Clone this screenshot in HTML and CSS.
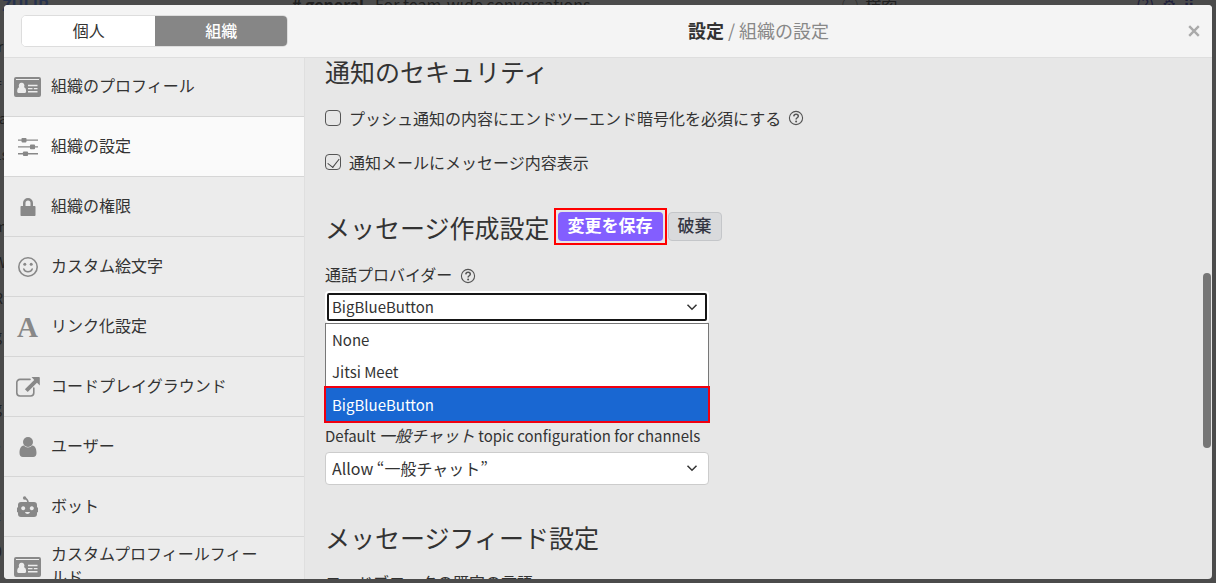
FILE: index.html
```html
<!DOCTYPE html>
<html lang="ja">
<head>
<meta charset="utf-8">
<title>組織の設定</title>
<link rel="stylesheet" href="styles.css">
</head>
<body>
<svg class="sprite" aria-hidden="true">
  <symbol id="card" viewBox="0 0 27 20"><path fill-rule="evenodd" d="M2 0h23a2 2 0 0 1 2 2v16a2 2 0 0 1-2 2H2a2 2 0 0 1-2-2V2a2 2 0 0 1 2-2zM2 2v1h23V2zM7.600 5.800a2.600 2.900 0 0 0-2.400 4.500C3.700 10.800 3.200 12.500 3.200 14.500c0 .8.500 1.400 1.200 1.400h6.500c.7 0 1.200-.6 1.200-1.400 0-2-.5-3.700-2.100-4.200A2.600 2.900 0 0 0 7.600 5.800zM14 7.800v1.400h9.500V7.800zM14 10.900v1.400h4.500v-1.400zM19.800 10.900v1.400h3.700v-1.400zM14 14v1.400h9.500V14z"/></symbol>
  <symbol id="sliders" viewBox="0 0 20 20"><path d="M0 2.400h20v1.400H0zM0 9.200h20v1.400H0zM0 16h20v1.400H0z"/><rect x="3.500" y="1" width="5" height="4.400" rx=".8"/><rect x="12" y="7.600" width="5" height="4.600" rx=".8"/><rect x="5" y="14.400" width="5" height="4.600" rx=".8"/></symbol>
  <symbol id="lock" viewBox="0 0 20 20"><path fill-rule="evenodd" d="M3.500 9H5V6a5 5 0 0 1 10 0v3h1.500c.6 0 1 .4 1 1v8c0 .6-.4 1-1 1h-13c-.6 0-1-.4-1-1v-8c0-.6.4-1 1-1zm4 0h5V6a2.500 2.500 0 0 0-5 0z"/></symbol>
  <symbol id="smile" viewBox="0 0 20 20"><circle cx="10" cy="10" r="9.200" fill="none" stroke="currentColor" stroke-width="1.600"/><circle cx="6.800" cy="7.200" r="1.500"/><circle cx="13.200" cy="7.200" r="1.500"/><path d="M5.800 12c1.300 3.600 7.100 3.600 8.400 0" fill="none" stroke="currentColor" stroke-width="1.600" stroke-linecap="round"/></symbol>
  <symbol id="external" viewBox="0 0 24 20"><path d="M14 2.400H4A3.200 3.200 0 0 0 .8 5.600v10.200A3.200 3.200 0 0 0 4 19h10.600a3.200 3.200 0 0 0 3.200-3.200V11" fill="none" stroke="currentColor" stroke-width="1.600" stroke-linecap="round"/><path d="M15.500 0H23c.5 0 .8.300.8.800V8.500L21 5.800l-9.300 9.300-2.800-2.800L18.200 3z"/></symbol>
  <symbol id="user" viewBox="0 0 20 20"><circle cx="10" cy="5" r="5"/><path d="M5.800 8.600a5.700 5.700 0 0 0 8.400 0c3.200.4 4.300 3.600 4.300 7.400 0 2.400-1.300 4-3.400 4H4.900c-2.100 0-3.400-1.600-3.400-4 0-3.800 1.100-7 4.300-7.400z"/></symbol>
  <symbol id="bot" viewBox="0 0 21 21"><path d="M8 2.200c1.800.6 3 2 3.200 4.800" fill="none" stroke="currentColor" stroke-width="1.500"/><circle cx="7.600" cy="2" r="1.700"/><path fill-rule="evenodd" d="M4 6h13a3 3 0 0 1 3 3v2l1 1v4l-1 .5V18a3 3 0 0 1-3 3H4a3 3 0 0 1-3-3v-1.500L0 16v-4l1-1V9a3 3 0 0 1 3-3zM6.200 10.200a2 2 0 1 0 .01 0zM14.800 10.200a2 2 0 1 0 .01 0zM8 16c.6 2.500 4.400 2.500 5 0z"/></symbol>
  <symbol id="help" viewBox="0 0 16 16"><circle cx="8" cy="8" r="6.600" fill="none" stroke="currentColor" stroke-width="1.100"/><path d="M5.800 6.300c.3-2.900 4.500-2.600 4.500-.1 0 1.600-2.200 1.500-2.200 3.300" fill="none" stroke="currentColor" stroke-width="1.500"/><circle cx="8.100" cy="11.500" r="1"/></symbol>
  <symbol id="chevron" viewBox="0 0 12 12"><path d="M1.500 3.800 6 8.200l4.500-4.400" fill="none" stroke="currentColor" stroke-width="1.500"/></symbol>
</svg>

<div class="backdrop" aria-hidden="true">
  <div class="app-bar">
    <span class="brand">ZULIP</span>
    <span class="channel"><b># general</b> &nbsp; For team-wide conversations</span>
    <span class="search">◯ &nbsp;検索</span>
    <span class="tools">(?) &nbsp;⚙ &nbsp;⠿</span>
  </div>
  <div class="app-side"><span>ir</span><span>=</span><span>ra</span><span>1s</span><span>-</span><span>m</span><span>W</span><span>R</span><span>g</span><span>f</span><span>g</span><span>s</span><span>t</span><span>z</span><span>0</span></div>
</div>

<div class="modal" role="dialog" aria-labelledby="title">
  <header class="modal-head">
    <div class="tabs-area">
      <div class="tabs">
        <button class="tab" type="button">個人</button>
        <button class="tab tab-active" type="button">組織</button>
      </div>
    </div>
    <h1 class="title" id="title"><b>設定</b> / 組織の設定</h1>
    <button class="close" type="button" aria-label="閉じる"><svg viewBox="0 0 10 10"><path d="M1 1l8 8M9 1L1 9" stroke="currentColor" stroke-width="2"/></svg></button>
  </header>

  <div class="modal-body">
    <nav class="sidebar">
      <a class="item" href="#profile"><span class="icon"><svg class="i-card"><use href="#card"/></svg></span><span class="name">組織のプロフィール</span></a>
      <a class="item item-active" href="#settings"><span class="icon"><svg class="i-base"><use href="#sliders"/></svg></span><span class="name">組織の設定</span></a>
      <a class="item" href="#permissions"><span class="icon"><svg class="i-base"><use href="#lock"/></svg></span><span class="name">組織の権限</span></a>
      <a class="item" href="#emoji"><span class="icon"><svg class="i-base"><use href="#smile"/></svg></span><span class="name">カスタム絵文字</span></a>
      <a class="item" href="#linkifiers"><span class="icon letter" aria-hidden="true">A</span><span class="name">リンク化設定</span></a>
      <a class="item" href="#playgrounds"><span class="icon"><svg class="i-wide"><use href="#external"/></svg></span><span class="name">コードプレイグラウンド</span></a>
      <a class="item" href="#users"><span class="icon"><svg class="i-base"><use href="#user"/></svg></span><span class="name">ユーザー</span></a>
      <a class="item" href="#bots"><span class="icon"><svg class="i-bot"><use href="#bot"/></svg></span><span class="name">ボット</span></a>
      <a class="item" href="#fields"><span class="icon"><svg class="i-card"><use href="#card"/></svg></span><span class="name">カスタムプロフィールフィールド</span></a>
    </nav>

    <main class="content">
      <section class="security">
        <h2 class="heading">通知のセキュリティ</h2>
        <label class="check"><input class="box" type="checkbox"><span>プッシュ通知の内容にエンドツーエンド暗号化を必須にする</span><svg class="help"><use href="#help"/></svg></label>
        <label class="check"><input class="box" type="checkbox" checked><span>通知メールにメッセージ内容表示</span></label>
      </section>

      <section class="compose">
        <div class="section-head">
          <h2 class="heading">メッセージ作成設定</h2>
          <div class="marked"><button class="btn save" type="button">変更を保存</button></div>
          <button class="btn discard" type="button">破棄</button>
        </div>
        <div class="field field-open">
          <label class="label" for="provider">通話プロバイダー <svg class="help"><use href="#help"/></svg></label>
          <div class="select-wrap">
            <select class="select select-focus" id="provider"><option>None</option><option>Jitsi Meet</option><option selected>BigBlueButton</option></select>
            <svg class="chevron"><use href="#chevron"/></svg>
            <ul class="menu" role="listbox" aria-label="通話プロバイダー">
              <li class="option" role="option">None</li>
              <li class="option" role="option">Jitsi Meet</li>
              <li class="option option-active" role="option" aria-selected="true">BigBlueButton</li>
            </ul>
          </div>
        </div>
        <div class="field">
          <label class="label label-latin" for="topic">Default <em>一般チャット</em> topic configuration for channels</label>
          <div class="select-wrap">
            <select class="select" id="topic"><option>Allow “一般チャット”</option></select>
            <svg class="chevron"><use href="#chevron"/></svg>
          </div>
        </div>
      </section>

      <section class="feed">
        <div class="section-head"><h2 class="heading">メッセージフィード設定</h2></div>
        <p class="label">コードブロックの既定の言語</p>
      </section>
    </main>
  </div>
  <div class="scroll-thumb"></div>
</div>
</body>
</html>
```

FILE: styles.css
```css
* { box-sizing: border-box; }

body {
  margin: 0;
  height: 100vh;
  padding: 5px 4px 4px;
  overflow: hidden;
  background: #4b4b4b;
  color: #333;
  font: 16px/24px "Noto Sans CJK JP", sans-serif;
}

button, select, input { font: inherit; color: inherit; margin: 0; }
h1, h2, p, ul { margin: 0; padding: 0; font-weight: 400; }
.sprite { position: absolute; width: 0; height: 0; }
svg { fill: currentColor; display: block; }

/* Dimmed app behind the dialog */
.backdrop { position: absolute; inset: 0; overflow: hidden; color: #202020; }
.app-bar { position: absolute; top: -6px; left: 0; right: 0; height: 20px; line-height: 20px; font-size: 16px; }
.app-bar span { position: absolute; white-space: nowrap; }
.brand { left: 2px; font-weight: 700; color: #26324e; }
.channel { left: 292px; }
.search { left: 842px; }
.tools { left: 1136px; color: #20203c; }
.app-side { position: absolute; left: -6px; top: 34px; bottom: 20px; width: 10px; overflow: hidden; display: flex; flex-direction: column; justify-content: space-between; font-size: 14px; }

.modal {
  position: relative;
  height: 100%;
  display: flex;
  flex-direction: column;
  overflow: hidden;
  border-radius: 4px;
  background: #e7e7e7;
}
.modal-head {
  flex: none;
  display: flex;
  align-items: center;
  height: 53px;
  background: #f4f4f4;
  border-bottom: 1px solid #dedede;
}
.tabs-area { flex: none; width: 301px; padding: 0 17px; }
.tabs { display: flex; width: 267px; height: 32px; border-radius: 5px; overflow: hidden; border: 1px solid #ddd; background: #fff; }
.tab { flex: 1; padding: 0 0 3px; border: 0; background: #fff; line-height: 24px; }
.tab-active { margin: -1px; background: #868686; color: #fff; font-weight: 500; }
.title { flex: 1; padding-bottom: 2px; text-align: center; font-size: 18px; line-height: 26px; color: #888; }
.title b { color: #333; font-weight: 700; }
.close { position: absolute; right: 8px; top: 16px; width: 20px; height: 20px; padding: 4px; border: 0; background: none; color: #aaa; }

.modal-body { flex: 1; min-height: 0; display: flex; }
.sidebar { flex: none; width: 301px; overflow: hidden; background: #ececec; border-right: 1px solid #dfdfdf; }
.item {
  display: flex;
  align-items: center;
  gap: 10px;
  height: 60px;
  padding: 0 40px 0 10px;
  border-bottom: 1px solid #d6d6d6;
  color: #333;
  text-decoration: none;
}
.item:first-child { height: 59px; }
.item-active { background: #fafafa; }
.icon { flex: none; display: flex; justify-content: center; width: 27px; color: #888; }
.name { flex: 1; padding-bottom: 3px; line-height: 23px; }
.letter { font: 700 29px/30px "Liberation Serif", serif; }
.i-card { width: 27px; height: 20px; }
.i-base { width: 20px; height: 20px; }
.i-wide { width: 24px; height: 20px; }
.i-bot { width: 21px; height: 21px; }

.content { flex: 1; min-width: 0; overflow: hidden; padding: 0 20px; }
.heading { font-size: 25px; line-height: 32px; white-space: nowrap; }
.security .heading { margin-top: -3px; }
.check { display: flex; align-items: center; width: max-content; margin-top: 20px; }
.heading + .check { margin-top: 19px; }
.box {
  appearance: none;
  width: 16px;
  height: 16px;
  margin-right: 8px;
  border: 1px solid #555;
  border-radius: 4px;
}
.box:checked::after {
  content: "";
  display: block;
  width: 6px;
  height: 10px;
  margin: 1px auto;
  border: solid #444;
  border-width: 0 1px 1px 0;
  transform: rotate(38deg);
}
.help { width: 16px; height: 16px; margin-left: 7px; color: #555; }
.section-head { display: flex; align-items: center; height: 36px; margin-top: 35px; }
.btn { display: block; height: 29px; padding: 0 10px 2px; border: 0; border-radius: 4px; font-size: 17px; line-height: 24px; white-space: nowrap; }
.marked { margin-left: 4px; margin-top: -2px; padding: 2px; border: 2px solid #f00; }
.save { background: #835eff; color: #fff; font-weight: 700; }
.discard { margin-left: 1px; margin-top: -2px; padding: 0 9px 2px; background: #d9dadc; border: 1px solid #c4c6c9; color: #343642; font-weight: 500; }

.field { width: 384px; max-width: 100%; margin-top: 17px; }
.field-open { margin-bottom: 100px; }
.field-open + .field { margin-top: 0; }
.label { display: block; height: 29px; white-space: nowrap; }
.label .help { display: inline-block; margin-left: 4px; vertical-align: -3px; }
.label-latin { font-size: 15px; }
.label em { font-size: 16px; font-style: italic; }
.select-wrap { position: relative; }
.select {
  appearance: none;
  display: block;
  width: 100%;
  height: 33px;
  padding: 0 6px 2px;
  border: 1px solid #ccc;
  border-radius: 4px;
  background: #fff;
}
.select-focus {
  height: 32px;
  padding: 0 7px;
  border: 0;
  font-size: 15px;
  outline: 2px solid #161616;
  outline-offset: -4px;
}
.chevron { position: absolute; right: 11px; top: 10px; width: 12px; height: 12px; color: #333; pointer-events: none; }
.menu { position: absolute; z-index: 2; top: 32px; left: 0; right: 0; border: 1px solid #777; background: #fff; list-style: none; }
.option { height: 32px; padding: 0 6px; font-size: 15px; line-height: 31px; }
.option-active { height: 33px; line-height: 33px; background: #1967d2; color: #fff; outline: 2px solid #f00010; }
.feed .section-head { margin-top: 34px; }
.feed .label { margin-top: 15px; }

.scroll-thumb { position: absolute; right: 1px; top: 268px; width: 8px; height: 175px; border-radius: 4px; background: #767676; }
```
